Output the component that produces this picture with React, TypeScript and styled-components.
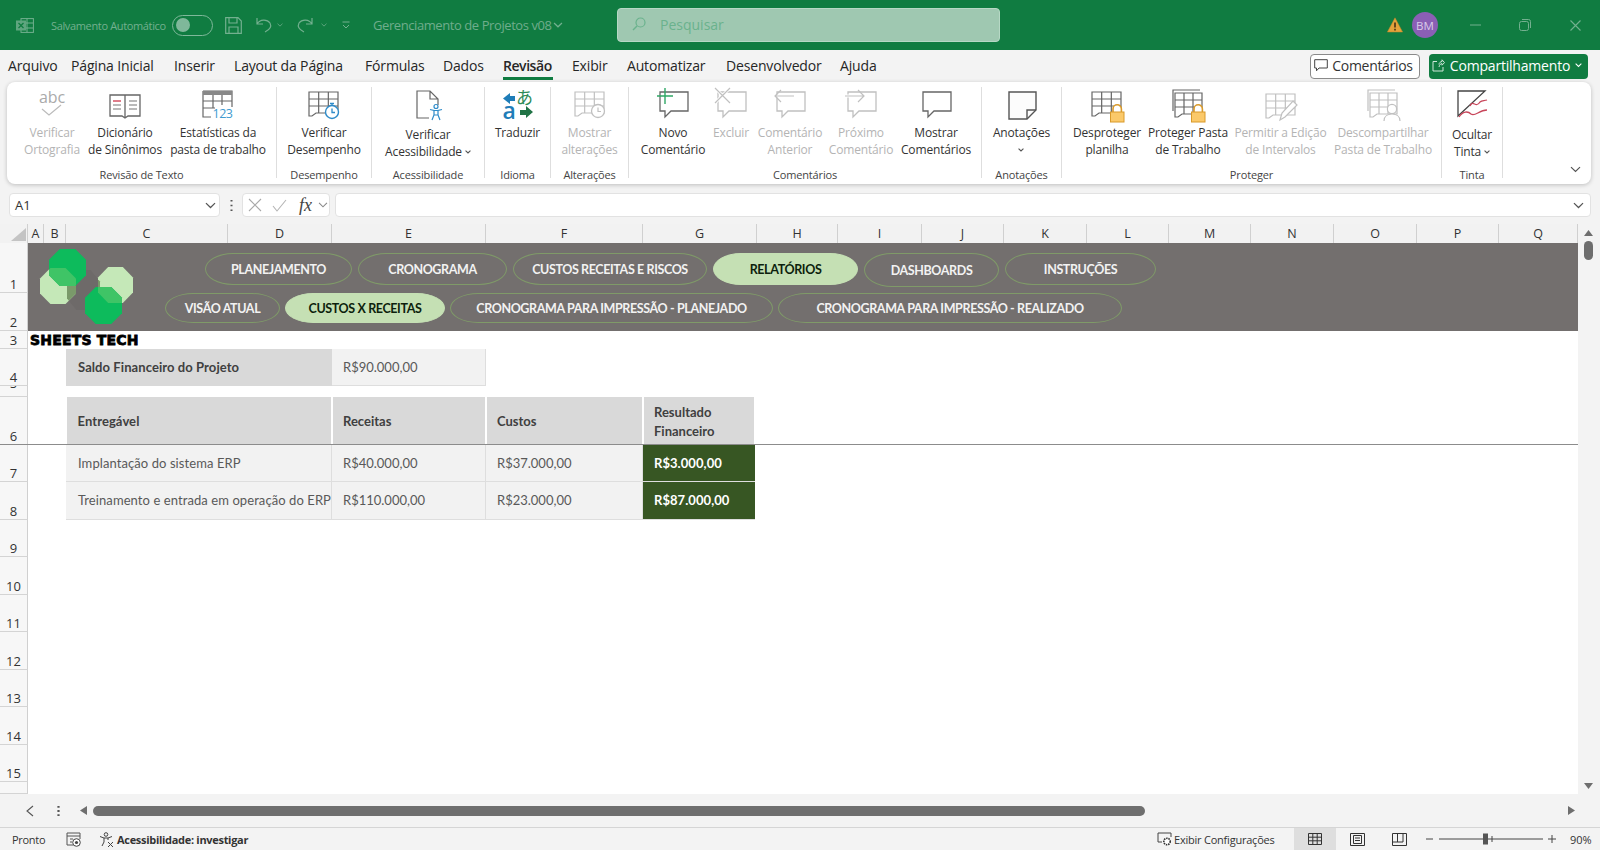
import React from "react";
import styled, { createGlobalStyle } from "styled-components";

const UI = `"Open Sans", "Noto Sans", sans-serif`;
const CELL = `"Lato", "Liberation Sans", sans-serif`;

const Global = createGlobalStyle`
  html, body { margin: 0; padding: 0; background: #f3f3f3; }
  #root { width: 1600px; height: 850px; overflow: hidden; }
  * { box-sizing: border-box; }
`;

const Shell = styled.div`
  width: 1600px; height: 850px; display: flex; flex-direction: column;
  background: #f3f3f3; font-family: ${UI}; color: #333; overflow: hidden;
`;

/* ---------- title bar ---------- */
const TitleBar = styled.header`
  height: 50px; flex: none; background: #107c41; display: flex; align-items: center;
  padding-left: 16px; position: relative; color: #73b08f;
`;
const AutoSave = styled.span`font-size: 11px; margin-left: 17px; letter-spacing: -0.35px; width: 113px; white-space: nowrap;`;
const Toggle = styled.span`
  width: 41px; height: 21px; border: 1.5px solid #7fb89a; border-radius: 11px; margin-left: 8px;
  display: flex; align-items: center; padding-left: 3px;
  &::before { content: ""; width: 14px; height: 14px; border-radius: 50%; background: #7fb89a; }
`;
const QuickIcon = styled.svg<{ $ml: number }>`display: block; flex: none; margin-left: ${p => p.$ml}px; overflow: visible;`;
const DocTitle = styled.span`font-size: 13px; margin-left: 23px; letter-spacing: -0.42px; white-space: nowrap; width: 173px; color: #6fad8c;`;
const Search = styled.div`
  position: absolute; left: 617px; top: 8px; width: 383px; height: 34px;
  background: #9fc8b1; border: 1px solid #b7d8c5; border-radius: 4px;
  display: flex; align-items: center; padding: 0 0 2px 14px; gap: 14px;
  font-size: 14px; color: #6ab28d;
`;
const TitleRight = styled.div`margin-left: auto; display: flex; align-items: center; height: 100%; padding-right: 19px;`;
const Avatar = styled.span`
  width: 26px; height: 26px; border-radius: 50%; background: #8a5fb5; color: #d9cbe8;
  font-size: 11.5px; display: flex; align-items: center; justify-content: center; margin-left: 9px;
`;

/* ---------- tabs ---------- */
const TabRow = styled.nav`
  height: 32px; flex: none; display: flex; align-items: center; padding: 0 12px 0 8px;
`;
const Tab = styled.span<{ $w: number }>`
  width: ${p => p.$w}px; flex: none; display: block; color: #262626; white-space: nowrap;
  font-size: 14px; letter-spacing: -0.16px; line-height: 20px;
`;
const TabLabel = styled.span<{ $active?: boolean }>`
  position: relative; display: inline-block;
  font-weight: ${p => (p.$active ? 600 : 400)};
  letter-spacing: ${p => (p.$active ? "-0.45px" : "inherit")};
  ${p => p.$active && `&::after { content: ""; position: absolute; left: 0; right: -1px; bottom: -4px; height: 3px; background: #107c41; }`}
`;
const TabActions = styled.div`margin-left: auto; display: flex; gap: 9px; align-items: center;`;
const CommentsBtn = styled.button`
  width: 110px; height: 25px; border: 1px solid #8a8a8a; border-radius: 4px; background: #fff; padding: 0 3px 1px 0;
  display: flex; align-items: center; justify-content: center; gap: 4px;
  font: 14px ${UI}; letter-spacing: -0.3px; color: #333;
`;
const ShareBtn = styled.button`
  width: 159px; height: 25px; border: 0; border-radius: 4px; background: #107c41; padding: 0 3px 1px 0;
  display: flex; align-items: center; justify-content: center; gap: 5px;
  font: 14px ${UI}; letter-spacing: -0.2px; color: #fff; white-space: nowrap;
`;

/* ---------- ribbon ---------- */
const Ribbon = styled.section`
  height: 102px; flex: none; margin: 0 9px 0 7px; background: #fff; border-radius: 8px;
  box-shadow: 0 1px 4px rgba(0,0,0,.22); display: flex; padding: 5px 0 6px;
`;
const Group = styled.div<{ $w: number }>`
  width: ${p => p.$w}px; flex: none; display: flex; flex-direction: column;
  border-right: 1px solid #dedede;
`;
const GroupRow = styled.div`flex: 1; display: flex; justify-content: center; min-height: 0;`;
const StartRow = styled(GroupRow)<{ $pl: number }>`justify-content: flex-start; padding-left: ${p => p.$pl}px;`;
const GroupLabel = styled.div`
  height: 14px; line-height: 14px; margin-bottom: -4px; font-size: 11px; letter-spacing: -0.15px; text-align: center; color: #444;
  white-space: nowrap;
`;
const RibbonBtn = styled.div<{ $w?: number; $off?: boolean }>`
  width: ${p => (p.$w ? `${p.$w}px` : "auto")}; flex: ${p => (p.$w ? "none" : "1")};
  display: flex; flex-direction: column; align-items: center; padding-top: 2px;
  font-size: 12px; letter-spacing: -0.16px; line-height: 16.5px; text-align: center; white-space: nowrap;
  color: ${p => (p.$off ? "#b4b4b4" : "#333")};
`;
const BtnText = styled.div<{ $low?: boolean }>`margin-top: ${p => (p.$low ? 6 : 4)}px;`;
const Glyph = styled.svg`display: block; width: 32px; height: 32px; overflow: visible; flex: none;`;
const Collapse = styled.div`flex: 1; display: flex; justify-content: flex-end; align-items: flex-end; padding: 0 10px 5px 0;`;

/* ---------- formula bar ---------- */
const FormulaRow = styled.div`
  height: 24px; flex: none; margin-top: 9px; display: flex; align-items: stretch; padding: 0 9px;
`;
const FieldBox = styled.div<{ $w?: number }>`
  ${p => (p.$w ? `width: ${p.$w}px; flex: none;` : "flex: 1;")}
  background: #fff; border: 1px solid #e2e2e2; border-radius: 4px; display: flex; align-items: center;
`;
const FxBox = styled(FieldBox)`margin-right: 5px;`;
const NameText = styled.span`font-size: 13px; margin-left: 5px; flex: 1;`;
const Fx = styled.span`font: italic 18px "Liberation Serif", serif; color: #444; margin-left: 12px; width: 15px;`;
const Dots = styled.div`width: 22px; flex: none; display: flex; align-items: center; justify-content: center;`;

/* ---------- sheet ---------- */
const SheetArea = styled.main`height: 570px; flex: none; margin-top: 7px; display: flex;`;
const Grid = styled.div`
  width: 1578px; height: 570px; background: #fff; display: grid; overflow: hidden; position: relative;
  grid-template-columns: 28px 16px 22px 162px 104px 154px 157px 114px 81px 84px 82px 83px 82px 82px 83px 83px 82px 79px;
  grid-template-rows: 19px 50px 37.5px 18.5px 36.5px 11px 48px 37.5px 37.5px repeat(7, 37.5px) 12px;
`;
const Corner = styled.div`grid-column: 1; grid-row: 1; background: #f2f2f2; border-right: 1px solid #d0d0d0; display: flex; align-items: flex-end; justify-content: flex-end; padding: 0 1px 2px 0;`;
const ColHead = styled.div<{ $c: number }>`
  grid-column: ${p => p.$c}; grid-row: 1; background: #f2f2f2; border-right: 1px solid #d0d0d0;
  font-size: 12.5px; line-height: 19px; text-align: center; color: #333;
`;
const RowHead = styled.div<{ $r: number; $pb?: number }>`
  grid-column: 1; grid-row: ${p => p.$r}; background: #f7f7f7; border-right: 1px solid #d0d0d0; border-bottom: 1px solid #d4d4d4;
  font-size: 13px; line-height: 16px; text-align: center; color: #333; overflow: hidden;
  display: flex; align-items: flex-end; justify-content: center; padding-bottom: ${p => p.$pb ?? 0}px;
`;
const Band = styled.div`
  grid-column: 2 / -1; grid-row: 2 / span 2; background: #736f6e; position: relative;
  display: flex; flex-direction: column;
`;
const LogoMark = styled.svg`position: absolute; left: 8px; top: 2px; width: 100px; height: 85px;`;
const PillRowTop = styled.div`display: flex; gap: 6px; height: 50px; padding: 10px 0 0 177px;`;
const PillRowBottom = styled.div`display: flex; gap: 5px; padding-left: 137px;`;
const Pill = styled.div<{ $w: number; $h: number; $on?: boolean }>`
  width: ${p => p.$w}px; height: ${p => p.$h}px; flex: none;
  border: 1px solid ${p => (p.$on ? "#c5e0b4" : "#7f9a68")};
  border-radius: 28px / 50%;
  background: ${p => (p.$on ? "#c5e0b4" : "transparent")};
  color: ${p => (p.$on ? "#0d1f0d" : "#f2f2f2")};
  font: 700 12.5px ${CELL}; letter-spacing: -0.38px; display: flex; align-items: center; justify-content: center; white-space: nowrap;
`;
const Brand = styled.div`
  grid-column: 2 / span 5; grid-row: 4; padding: 1px 0 0 2px; line-height: 18px; white-space: nowrap;
  font: 900 14px "DejaVu Sans", sans-serif; color: #000; letter-spacing: 0.2px; -webkit-text-stroke: 0.8px #000;
`;
const Cell = styled.div<{ $c: string | number; $r: number; $kind: "head" | "plain" | "result"; $wide?: boolean }>`
  grid-column: ${p => p.$c}; grid-row: ${p => p.$r}; display: flex; align-items: center;
  padding-left: ${p => (p.$wide ? 12 : 11)}px; font-family: ${CELL}; font-size: 13px; white-space: nowrap; overflow: hidden;
  letter-spacing: ${p => (p.$wide ? "0.08px" : "0")};
  ${p => p.$kind === "head" && `background: #d9d9d9; color: #404040; font-weight: 700;`}
  ${p => p.$kind === "plain" && `background: #f2f2f2; color: #595959; border: 1px solid #dedede; border-left-width: 0; border-top-width: 0;`}
  ${p => p.$kind === "result" && `background: #375623; color: #fff; font-weight: 700; letter-spacing: 0.06px; margin-right: 2px; border-bottom: 1px solid #dedede;`}
`;
const HeadGap = styled(Cell)`margin: 0 1px; padding-left: ${p => (p.$wide ? 10.5 : 10)}px;`;
const ResultHead = styled(Cell)`margin: 0 3px 0 1px; padding: 3px 0 0 10px; line-height: 19.5px; white-space: normal;`;
const FreezeLine = styled.div`grid-column: 1 / -1; grid-row: 8; align-self: start; height: 1px; margin-top: -1px; background: #8c8c8c; z-index: 2;`;

const VScroll = styled.aside`
  flex: 1; display: flex; flex-direction: column; align-items: center; padding: 6px 1px 0 0;
`;
const VThumb = styled.div`width: 9px; height: 19px; border-radius: 5px; background: #6e6e6e; margin-top: 5px;`;
const VDown = styled.div`margin-top: auto; margin-bottom: 5px;`;

const HScroll = styled.div`
  height: 33px; flex: none; display: flex; align-items: center; padding: 0 25px 0 25px;
`;
const HThumb = styled.div`width: 1052px; height: 10px; border-radius: 5px; background: #6e6e6e; margin-left: 6px;`;

const StatusBar = styled.footer`
  height: 23px; flex: none; border-top: 1px solid #d5d5d5; display: flex; align-items: center; padding: 0 10px 0 12px;
  font-size: 11px; color: #333; white-space: nowrap;
`;
const Pronto = styled.span`width: 32px; letter-spacing: -0.3px;`;
const StatusIcon = styled.svg<{ $ml?: number }>`display: block; flex: none; margin-left: ${p => p.$ml ?? 0}px; overflow: visible;`;
const A11y = styled.strong`font-weight: 700; margin-left: 3px; letter-spacing: -0.3px;`;
const StatusRight = styled.div`margin-left: auto; display: flex; align-items: center; height: 100%;`;
const ViewLabel = styled.span`margin-left: 2px; width: 120px; letter-spacing: -0.22px;`;
const ViewBtn = styled.div<{ $on?: boolean }>`
  width: 42px; height: 100%; display: flex; align-items: center; justify-content: center;
  background: ${p => (p.$on ? "#dedede" : "transparent")};
`;
const ZoomWrap = styled.div`display: flex; align-items: center; margin-left: 6px;`;
const ZoomLabel = styled.span`margin-left: 14px; width: 20px; text-align: right;`;

/* ---------- drawings ---------- */
const DARK = "#666";
const OFF = "#c0c0c0";

const Table = ({ c = DARK, x = 1, y = 3, w = 29, h = 21 }: { c?: string; x?: number; y?: number; w?: number; h?: number }) => (
  <g fill="none" stroke={c} strokeWidth="1.2">
    <path d={`M${x} ${y}H${x + w}V${y + h}H${x + 7}L${x + 3} ${y + h + 3}H${x}Z`} />
    <path d={`M${x} ${y + h / 3}H${x + w}M${x} ${y + (2 * h) / 3}H${x + w}M${x + w / 3} ${y}V${y + h}M${x + (2 * w) / 3} ${y}V${y + h}`} />
  </g>
);
const Lock = () => (
  <g>
    <path d="M22 24v-4a4.2 4.2 0 0 1 8.4 0v4" fill="#fff" stroke="#d99a2b" strokeWidth="1.6" />
    <rect x="19.5" y="23" width="13.5" height="10" fill="#fbc96a" stroke="#d99a2b" />
  </g>
);
const Bubble = ({ c }: { c: string }) => (
  <path d="M3 3H31V22H14L8 28V22H3Z" fill="#fff" stroke={c} strokeWidth="1.3" />
);

const icons: Record<string, React.ReactNode> = {
  spell: (
    <>
      <text x="16" y="14" textAnchor="middle" fontSize="16" fontFamily={UI} fill="#aaa">abc</text>
      <path d="M6 20L13 26L25 16" fill="none" stroke="#bbb" strokeWidth="1.2" />
    </>
  ),
  book: (
    <>
      <path d="M16 6H1V27H13L16 29L19 27H31V6H16V28" fill="none" stroke={DARK} strokeWidth="1.3" />
      <path d="M4 12H12" stroke="#d2455a" strokeWidth="1.4" />
      <path d="M4 16H12M4 20H12M20 12H28M20 16H28M20 20H28" stroke="#777" strokeWidth="1.2" />
    </>
  ),
  stats: (
    <>
      <path d="M1 2H30V18M1 2V28H9" fill="none" stroke={DARK} strokeWidth="1.2" />
      <rect x="1" y="2" width="29" height="4" fill="#888" />
      <path d="M1 12H30M1 19H13M11 6V19M20 6V16" stroke={DARK} strokeWidth="1.2" fill="none" />
      <text x="10.5" y="29" fontSize="12.5" fontFamily={UI} letterSpacing="-0.5" fill="#3f9bd0">123</text>
    </>
  ),
  perf: (
    <>
      <Table />
      <circle cx="24" cy="23" r="6.5" fill="#fff" stroke="#2e8bc9" strokeWidth="1.4" />
      <path d="M24 19.5V23.5H27M22 14.5H26M24 14.5V16.5" fill="none" stroke="#2e8bc9" strokeWidth="1.3" />
    </>
  ),
  access: (
    <>
      <path d="M17 29H5V2H18L26 10V16M18 2V10H26" fill="none" stroke={DARK} strokeWidth="1.2" />
      <circle cx="24" cy="17.5" r="2" fill="none" stroke="#2e8bc9" strokeWidth="1.2" />
      <path d="M18 20.5L22 21.5V26L20 31M30 20.5L26 21.5V26L28 31M22 21.5H26M22 26H26" fill="none" stroke="#2e8bc9" strokeWidth="1.2" />
    </>
  ),
  translate: (
    <>
      <path d="M1 9.5L8 4V7H13V12H8V15Z" fill="#1f7db8" />
      <text x="14" y="15" fontSize="17" fontFamily={'"Noto Sans CJK JP", sans-serif'} fill="#2e8b57">あ</text>
      <text x="0.5" y="30" fontSize="23" fontFamily={UI} fontWeight="600" fill="#1f7db8">a</text>
      <path d="M31 23L24 29V26H18V21H24V17Z" fill="#217346" />
    </>
  ),
  changes: (
    <>
      <Table c={OFF} />
      <circle cx="24" cy="22" r="6.5" fill="#fff" stroke={OFF} strokeWidth="1.3" />
      <path d="M24 18.5V22.5H27" fill="none" stroke={OFF} strokeWidth="1.2" />
    </>
  ),
  newc: (
    <>
      <Bubble c={DARK} />
      <path d="M0 7H16M8 -1V15" stroke="#2fa866" strokeWidth="1.4" />
    </>
  ),
  delc: (
    <>
      <Bubble c={OFF} />
      <path d="M0 -1L15 14M15 -1L0 14" stroke="#fff" strokeWidth="3" />
      <path d="M0 -1L15 14M15 -1L0 14" stroke={OFF} strokeWidth="1.2" />
    </>
  ),
  prevc: (
    <>
      <Bubble c={OFF} />
      <path d="M0 7H20" stroke="#fff" strokeWidth="3" />
      <path d="M20 7H1M7 1L1 7L7 13" fill="none" stroke={OFF} strokeWidth="1.2" />
    </>
  ),
  nextc: (
    <>
      <Bubble c={OFF} />
      <path d="M-2 7H18" stroke="#fff" strokeWidth="3" />
      <path d="M0 7H19M13 1L19 7L13 13" fill="none" stroke={OFF} strokeWidth="1.2" />
    </>
  ),
  showc: <Bubble c={DARK} />,
  note: (
    <>
      <path d="M3 3H30V21L21 30H3Z" fill="#fcfcfc" stroke="#555" strokeWidth="1.4" />
      <path d="M30 21H21V30" fill="none" stroke="#555" strokeWidth="1.4" />
    </>
  ),
  unprot: (
    <>
      <Table />
      <Lock />
    </>
  ),
  protb: (
    <>
      <path d="M1 22V1H28" fill="none" stroke={DARK} strokeWidth="1.2" />
      <Table x={3} y={4} w={27} h={21} />
      <Lock />
    </>
  ),
  ranges: (
    <>
      <Table c={OFF} y={5} />
      <path d="M15 31L17 24L28 12L32 16L20 28Z" fill="#fff" stroke={OFF} strokeWidth="1.2" />
    </>
  ),
  unshare: (
    <>
      <path d="M1 22V1H28" fill="none" stroke={OFF} strokeWidth="1.2" />
      <Table c={OFF} x={3} y={4} w={27} h={21} />
      <circle cx="25" cy="20" r="4.6" fill="#fff" stroke={OFF} strokeWidth="1.2" />
      <path d="M17 32C17 27 21 25 25 25S33 27 33 32" fill="#fff" stroke={OFF} strokeWidth="1.2" />
    </>
  ),
  ink: (
    <>
      <path d="M2 2H29L2 27Z" fill="none" stroke="#444" strokeWidth="1.3" />
      <path d="M14 17C17 10 20 20 24 13C26 11 28 12 31 11" fill="none" stroke="#c8455a" strokeWidth="1.3" />
      <path d="M3 28C7 22 12 22 15 25C19 28 23 21 31 21" fill="none" stroke="#c8455a" strokeWidth="1.3" />
    </>
  ),
};

const Icon = ({ n }: { n: string }) => <Glyph viewBox="0 0 32 32">{icons[n]}</Glyph>;

const ChevSvg = styled.svg`display: inline-block; flex: none; vertical-align: middle;`;
const Chev = ({ s = 8, c = "#555", w = 1.2 }: { s?: number; c?: string; w?: number }) => (
  <ChevSvg width={s} height={s * 0.62} viewBox="0 0 8 5">
    <path d="M.7.8L4 4L7.3.8" fill="none" stroke={c} strokeWidth={w} />
  </ChevSvg>
);

const Btn = ({ n, w, off, low, children }: { n: string; w?: number; off?: boolean; low?: boolean; children: React.ReactNode }) => (
  <RibbonBtn $w={w} $off={off}>
    <Icon n={n} />
    <BtnText $low={low}>{children}</BtnText>
  </RibbonBtn>
);

const oct = (x: number, y: number, w: number, h: number) => {
  const a = w * 0.29, b = h * 0.29;
  return `${x + a},${y} ${x + w - a},${y} ${x + w},${y + b} ${x + w},${y + h - b} ${x + w - a},${y + h} ${x + a},${y + h} ${x},${y + h - b} ${x},${y + b}`;
};
const L1 = oct(40, 268, 36, 36), L2 = oct(98, 267, 35, 36);
const D1 = oct(49, 249, 37, 37), D2 = oct(85, 287, 37, 37), C = oct(67, 270, 33, 40);

const Logo = () => (
  <LogoMark viewBox="36 245 100 85">
    <defs>
      <clipPath id="l1"><polygon points={L1} /></clipPath>
      <clipPath id="l2"><polygon points={L2} /></clipPath>
    </defs>
    <polygon points={C} fill="#6e6a69" />
    <polygon points={L1} fill="#c5e8b8" />
    <polygon points={L2} fill="#c5e8b8" />
    <g clipPath="url(#l1)"><polygon points={C} fill="#7a9a6a" /></g>
    <g clipPath="url(#l2)"><polygon points={C} fill="#7a9a6a" /></g>
    <polygon points={D1} fill="#0dbb5c" />
    <polygon points={D2} fill="#0dbb5c" />
    <g clipPath="url(#l1)"><polygon points={D1} fill="#3fc466" /></g>
    <g clipPath="url(#l2)"><polygon points={D2} fill="#3fc466" /></g>
  </LogoMark>
);

const columns = "A B C D E F G H I J K L M N O P Q".split(" ");
const rowNums = [
  [1, 2], [2, 3], [3, 4], [4, 5], [5, 6], [6, 7], [7, 8], [8, 9], [9, 10], [10, 11], [11, 12], [12, 13], [13, 14], [14, 15], [15, 16],
];
const tabs: { t: string; w: number; on?: boolean }[] = [
  { t: "Arquivo", w: 63 }, { t: "Página Inicial", w: 103 }, { t: "Inserir", w: 60 }, { t: "Layout da Página", w: 131 },
  { t: "Fórmulas", w: 78 }, { t: "Dados", w: 60 }, { t: "Revisão", w: 69, on: true }, { t: "Exibir", w: 55 },
  { t: "Automatizar", w: 99 }, { t: "Desenvolvedor", w: 114 }, { t: "Ajuda", w: 40 },
];
const topPills: { t: string; w: number; h: number; on?: boolean }[] = [
  { t: "PLANEJAMENTO", w: 147, h: 32 }, { t: "CRONOGRAMA", w: 149, h: 32 }, { t: "CUSTOS RECEITAS E RISCOS", w: 194, h: 32 },
  { t: "RELATÓRIOS", w: 145, h: 32, on: true }, { t: "DASHBOARDS", w: 135, h: 34 }, { t: "INSTRUÇÕES", w: 151, h: 32 },
];
const lowPills: { t: string; w: number; on?: boolean }[] = [
  { t: "VISÃO ATUAL", w: 115 }, { t: "CUSTOS X RECEITAS", w: 160, on: true },
  { t: "CRONOGRAMA PARA IMPRESSÃO - PLANEJADO", w: 323 }, { t: "CRONOGRAMA PARA IMPRESSÃO - REALIZADO", w: 344 },
];
const dataRows = [
  { r: 8, d: "Implantação do sistema ERP", a: "R$40.000,00", b: "R$37.000,00", c: "R$3.000,00" },
  { r: 9, d: "Treinamento e entrada em operação do ERP", a: "R$110.000,00", b: "R$23.000,00", c: "R$87.000,00" },
];

const NameChev = styled.svg`margin-right: 3px; margin-left: auto;`;
const BareChev = styled.svg<{ $ml: number }>`margin-left: ${p => p.$ml}px; flex: none;`;
const FarRight = styled.svg`margin-left: auto; flex: none;`;
const FarChev = styled(FarRight)`margin-right: 6px;`;

export default function App() {
  const tm = "#73b08f";
  return (
    <Shell>
      <Global />
      <TitleBar>
        <QuickIcon $ml={0} width="18" height="15" viewBox="0 0 18 15">
          <rect x="5" y=".6" width="12.4" height="13.8" fill="none" stroke={tm} />
          <path d="M5 5H17M5 10H17M11 .6V14.4" stroke={tm} />
          <rect y="2.5" width="10" height="10" fill="#5fa57f" />
          <path d="M2.5 5L7.5 10M7.5 5L2.5 10" stroke="#107c41" strokeWidth="1.3" />
        </QuickIcon>
        <AutoSave>Salvamento Automático</AutoSave>
        <Toggle />
        <QuickIcon $ml={12} width="17" height="17" viewBox="0 0 17 17">
          <path d="M.7.7H13L16.3 4V16.3H.7ZM4 .7V6H12V.7M4 16.3V10H13V16.3" fill="none" stroke={tm} strokeWidth="1.2" />
        </QuickIcon>
        <QuickIcon $ml={14} width="16" height="16" viewBox="0 0 16 16">
          <path d="M1 1V7H7M1 7C4 2 11 2 14 6C16 10 13 13 9 15" fill="none" stroke={tm} strokeWidth="1.2" />
        </QuickIcon>
        <QuickIcon $ml={5} width="6" height="4" viewBox="0 0 8 5"><path d="M.7.8L4 4L7.3.8" fill="none" stroke={tm} /></QuickIcon>
        <QuickIcon $ml={14} width="16" height="16" viewBox="0 0 16 16">
          <path d="M15 1V7H9M15 7C12 2 5 2 2 6C0 10 3 13 7 15" fill="none" stroke={tm} strokeWidth="1.2" />
        </QuickIcon>
        <QuickIcon $ml={8} width="6" height="4" viewBox="0 0 8 5"><path d="M.7.8L4 4L7.3.8" fill="none" stroke={tm} /></QuickIcon>
        <QuickIcon $ml={15} width="8" height="8" viewBox="0 0 8 8"><path d="M.5 1H7.5M1 4L4 7L7 4" fill="none" stroke={tm} /></QuickIcon>
        <DocTitle>Gerenciamento de Projetos v08</DocTitle>
        <QuickIcon $ml={7} width="10" height="6" viewBox="0 0 8 5"><path d="M.7.8L4 4L7.3.8" fill="none" stroke={tm} /></QuickIcon>
        <Search>
          <svg width="14" height="14" viewBox="0 0 14 14">
            <circle cx="8.5" cy="5.5" r="4.5" fill="none" stroke="#6ab28d" strokeWidth="1.2" />
            <path d="M5 9L1 13" stroke="#6ab28d" strokeWidth="1.4" />
          </svg>
          Pesquisar
        </Search>
        <TitleRight>
          <svg width="16" height="16" viewBox="0 0 16 16">
            <path d="M8 .8L15.6 15H.4Z" fill="#e3a33b" stroke="#c4862a" strokeWidth=".5" />
            <path d="M8 5.5V10.5M8 11.8V13.4" stroke="#3c2a10" strokeWidth="1.5" />
          </svg>
          <Avatar>BM</Avatar>
          <QuickIcon $ml={32} width="11" height="2" viewBox="0 0 11 2"><path d="M0 1H11" stroke={tm} /></QuickIcon>
          <QuickIcon $ml={38} width="12" height="12" viewBox="0 0 12 12">
            <rect x=".5" y="2.5" width="9" height="9" rx="2" fill="none" stroke={tm} />
            <path d="M3 .5H9.5Q11.5 .5 11.5 2.5V9" fill="none" stroke={tm} />
          </QuickIcon>
          <QuickIcon $ml={39} width="11" height="11" viewBox="0 0 11 11"><path d="M.5.5L10.5 10.5M10.5.5L.5 10.5" stroke={tm} strokeWidth="1.1" /></QuickIcon>
        </TitleRight>
      </TitleBar>

      <TabRow>
        {tabs.map(t => (
          <Tab key={t.t} $w={t.w}><TabLabel $active={t.on}>{t.t}</TabLabel></Tab>
        ))}
        <TabActions>
          <CommentsBtn>
            <svg width="14" height="13" viewBox="0 0 14 13"><path d="M.7.7H13.3V9H5L2.5 11.8V9H.7Z" fill="none" stroke="#444" /></svg>
            Comentários
          </CommentsBtn>
          <ShareBtn>
            <svg width="13" height="13" viewBox="0 0 13 13"><path d="M5 2.5H1V12H11V8M7 5.5C7 4 8.5 2.5 10 2.5V.8L12.5 3.6L10 6.2V4.6C8.8 4.6 7.5 5.5 7 8" fill="none" stroke="#cfe6d9" /></svg>
            Compartilhamento
            <Chev s={7} c="#fff" />
          </ShareBtn>
        </TabActions>
      </TabRow>

      <Ribbon>
        <Group $w={270}>
          <StartRow $pl={10}>
            <Btn n="spell" w={70} off>Verificar<br />Ortografia</Btn>
            <Btn n="book" w={76}>Dicionário<br />de Sinônimos</Btn>
            <Btn n="stats" w={110}>Estatísticas da<br />pasta de trabalho</Btn>
          </StartRow>
          <GroupLabel>Revisão de Texto</GroupLabel>
        </Group>
        <Group $w={95}>
          <GroupRow><Btn n="perf">Verificar<br />Desempenho</Btn></GroupRow>
          <GroupLabel>Desempenho</GroupLabel>
        </Group>
        <Group $w={113}>
          <GroupRow><Btn n="access" low>Verificar<br />Acessibilidade <Chev s={6} w={1.5} /></Btn></GroupRow>
          <GroupLabel>Acessibilidade</GroupLabel>
        </Group>
        <Group $w={66}>
          <GroupRow><Btn n="translate">Traduzir</Btn></GroupRow>
          <GroupLabel>Idioma</GroupLabel>
        </Group>
        <Group $w={78}>
          <GroupRow><Btn n="changes" off>Mostrar<br />alterações</Btn></GroupRow>
          <GroupLabel>Alterações</GroupLabel>
        </Group>
        <Group $w={353}>
          <StartRow $pl={7}>
            <Btn n="newc" w={74}>Novo<br />Comentário</Btn>
            <Btn n="delc" w={42} off>Excluir</Btn>
            <Btn n="prevc" w={76} off>Comentário<br />Anterior</Btn>
            <Btn n="nextc" w={66} off>Próximo<br />Comentário</Btn>
            <Btn n="showc" w={84}>Mostrar<br />Comentários</Btn>
          </StartRow>
          <GroupLabel>Comentários</GroupLabel>
        </Group>
        <Group $w={80}>
          <GroupRow><Btn n="note">Anotações<br /><Chev s={6} w={1.5} /></Btn></GroupRow>
          <GroupLabel>Anotações</GroupLabel>
        </Group>
        <Group $w={380}>
          <StartRow $pl={8}>
            <Btn n="unprot" w={74}>Desproteger<br />planilha</Btn>
            <Btn n="protb" w={88}>Proteger Pasta<br />de Trabalho</Btn>
            <Btn n="ranges" w={97} off>Permitir a Edição<br />de Intervalos</Btn>
            <Btn n="unshare" w={108} off>Descompartilhar<br />Pasta de Trabalho</Btn>
          </StartRow>
          <GroupLabel>Proteger</GroupLabel>
        </Group>
        <Group $w={61}>
          <GroupRow><Btn n="ink" low>Ocultar<br />Tinta <Chev s={6} w={1.5} /></Btn></GroupRow>
          <GroupLabel>Tinta</GroupLabel>
        </Group>
        <Collapse><Chev s={11} c="#555" w={0.9} /></Collapse>
      </Ribbon>

      <FormulaRow>
        <FieldBox $w={211}>
          <NameText>A1</NameText>
          <NameChev width="11" height="7" viewBox="0 0 8 5"><path d="M.7.8L4 4L7.3.8" fill="none" stroke="#555" strokeWidth=".9" /></NameChev>
        </FieldBox>
        <Dots>
          <svg width="3" height="13" viewBox="0 0 3 13"><path d="M1.5 1v1.6M1.5 5.7v1.6M1.5 10.4V12" stroke="#555" strokeWidth="2" /></svg>
        </Dots>
        <FxBox $w={88}>
          <BareChev $ml={5} width="14" height="14" viewBox="0 0 14 14"><path d="M1 1L13 13M13 1L1 13" stroke="#a8a8a8" strokeWidth="1.1" /></BareChev>
          <BareChev $ml={10} width="15" height="13" viewBox="0 0 15 13"><path d="M1 7L5 12L14 1" fill="none" stroke="#b4b4b4" strokeWidth="1.1" /></BareChev>
          <Fx>fx</Fx>
          <BareChev $ml={4} width="10" height="6" viewBox="0 0 8 5"><path d="M.7.8L4 4L7.3.8" fill="none" stroke="#888" strokeWidth=".9" /></BareChev>
        </FxBox>
        <FieldBox>
          <FarChev width="11" height="7" viewBox="0 0 8 5"><path d="M.7.8L4 4L7.3.8" fill="none" stroke="#555" strokeWidth=".9" /></FarChev>
        </FieldBox>
      </FormulaRow>

      <SheetArea>
        <Grid>
          <Corner>
            <svg width="15" height="13" viewBox="0 0 15 13"><path d="M15 0V13H0Z" fill="#c4c4c4" /></svg>
          </Corner>
          {columns.map((c, i) => <ColHead key={c} $c={i + 2}>{c}</ColHead>)}
          {rowNums.map(([n, r]) => <RowHead key={n} $r={r} $pb={n === 5 ? 5 : 0}>{n}</RowHead>)}
          <RowHead $r={17} />

          <Band>
            <Logo />
            <PillRowTop>
              {topPills.map(p => <Pill key={p.t} $w={p.w} $h={p.h} $on={p.on}>{p.t}</Pill>)}
            </PillRowTop>
            <PillRowBottom>
              {lowPills.map(p => <Pill key={p.t} $w={p.w} $h={30} $on={p.on}>{p.t}</Pill>)}
            </PillRowBottom>
          </Band>

          <Brand>SHEETS TECH</Brand>

          <Cell $c="4 / span 2" $r={5} $kind="head" $wide>Saldo Financeiro do Projeto</Cell>
          <Cell $c={6} $r={5} $kind="plain">R$90.000,00</Cell>

          <HeadGap $c="4 / span 2" $r={7} $kind="head" $wide>Entregável</HeadGap>
          <HeadGap $c={6} $r={7} $kind="head">Receitas</HeadGap>
          <HeadGap $c={7} $r={7} $kind="head">Custos</HeadGap>
          <ResultHead $c={8} $r={7} $kind="head">Resultado<br />Financeiro</ResultHead>

          {dataRows.map(d => (
            <React.Fragment key={d.r}>
              <Cell $c="4 / span 2" $r={d.r} $kind="plain" $wide>{d.d}</Cell>
              <Cell $c={6} $r={d.r} $kind="plain">{d.a}</Cell>
              <Cell $c={7} $r={d.r} $kind="plain">{d.b}</Cell>
              <Cell $c={8} $r={d.r} $kind="result">{d.c}</Cell>
            </React.Fragment>
          ))}
          <FreezeLine />
        </Grid>
        <VScroll>
          <svg width="9" height="6" viewBox="0 0 9 6"><path d="M4.5 0L9 6H0Z" fill="#6e6e6e" /></svg>
          <VThumb />
          <VDown>
            <svg width="9" height="6" viewBox="0 0 9 6" display="block"><path d="M4.5 6L9 0H0Z" fill="#6e6e6e" /></svg>
          </VDown>
        </VScroll>
      </SheetArea>

      <HScroll>
        <svg width="10" height="12" viewBox="0 0 10 12"><path d="M8 1L2 6L8 11" fill="none" stroke="#555" strokeWidth="1.1" /></svg>
        <BareChev $ml={22} width="3" height="12" viewBox="0 0 3 12"><path d="M1.5 1v1.8M1.5 5.1v1.8M1.5 9.2V11" stroke="#555" strokeWidth="2.2" /></BareChev>
        <BareChev $ml={20} width="7" height="9" viewBox="0 0 7 9"><path d="M0 4.5L7 0V9Z" fill="#6e6e6e" /></BareChev>
        <HThumb />
        <FarRight width="7" height="9" viewBox="0 0 7 9"><path d="M7 4.5L0 0V9Z" fill="#6e6e6e" /></FarRight>
      </HScroll>

      <StatusBar>
        <Pronto>Pronto</Pronto>
        <StatusIcon $ml={22} width="15" height="15" viewBox="0 0 15 15">
          <path d="M7 13H1V1H14V7M1 4H14M4 7H7M4 10H6" fill="none" stroke="#555" />
          <circle cx="10.5" cy="10.5" r="3.8" fill="#fff" stroke="#444" />
          <circle cx="10.5" cy="10.5" r="1.6" fill="#444" />
        </StatusIcon>
        <StatusIcon $ml={18} width="15" height="15" viewBox="0 0 15 15">
          <circle cx="7" cy="2.5" r="1.8" fill="none" stroke="#444" />
          <path d="M1 4.5L5 6V10L3 14M13 4.5L9 6V8M5 6H9" fill="none" stroke="#444" />
          <path d="M9 10L14 15M14 10L9 15" stroke="#444" />
        </StatusIcon>
        <A11y>Acessibilidade: investigar</A11y>
        <StatusRight>
          <StatusIcon width="15" height="14" viewBox="0 0 15 14">
            <path d="M5 10H1V1H14V5" fill="none" stroke="#444" />
            <circle cx="10" cy="9.5" r="3.2" fill="#fff" stroke="#333" strokeWidth="1.6" strokeDasharray="1.5 .8" />
          </StatusIcon>
          <ViewLabel>Exibir Configurações</ViewLabel>
          <ViewBtn $on>
            <svg width="14" height="12" viewBox="0 0 14 12"><path d="M.5.5H13.5V11.5H.5ZM.5 4.2H13.5M.5 7.8H13.5M4.8.5V11.5M9.2.5V11.5" fill="none" stroke="#333" /></svg>
          </ViewBtn>
          <ViewBtn>
            <svg width="15" height="13" viewBox="0 0 15 13"><path d="M.5.5H14.5V12.5H.5ZM3.5 2.5H11.5V10.5H3.5ZM5 5H10M5 7.5H10" fill="none" stroke="#333" /></svg>
          </ViewBtn>
          <ViewBtn>
            <svg width="15" height="13" viewBox="0 0 15 13"><path d="M.5.5H14.5V12.5H.5ZM.5 9H11V.5M5.5.5V9" fill="none" stroke="#333" /></svg>
          </ViewBtn>
          <ZoomWrap>
            <svg width="130" height="14" viewBox="0 0 130 14">
              <path d="M0 7H7M13 7H117M122 7H130M126 3V11M66 4V10" stroke="#444" />
              <rect x="57" y="1.5" width="5" height="11" fill="#555" />
            </svg>
            <ZoomLabel>90%</ZoomLabel>
          </ZoomWrap>
        </StatusRight>
      </StatusBar>
    </Shell>
  );
}
